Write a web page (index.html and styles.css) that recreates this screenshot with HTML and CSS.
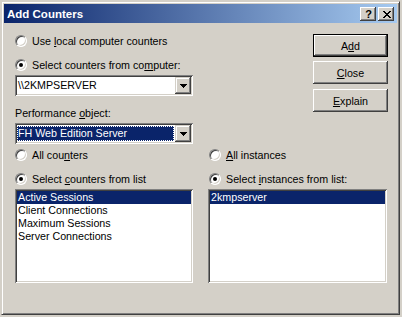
FILE: index.html
```html
<!DOCTYPE html>
<html lang="en">
<head>
    <meta charset="UTF-8">
    <title>Add Counters</title>
    <link rel="stylesheet" href="styles.css">
</head>
<body>
    <div class="window">
        <div class="titlebar">
            <span class="title">Add Counters</span>
            <div class="caption-buttons">
                <span class="caption-btn help">?</span>
                <span class="caption-btn">
                    <svg width="8" height="7" viewBox="0 0 8 7" shape-rendering="crispEdges">
                        <path d="M0 0h2v1H0zM6 0h2v1H6zM1 1h2v1H1zM5 1h2v1H5zM2 2h4v1H2zM3 3h2v1H3zM2 4h4v1H2zM1 5h2v1H1zM5 5h2v1H5zM0 6h2v1H0zM6 6h2v1H6z" fill="#000"/>
                    </svg>
                </span>
            </div>
        </div>

        <div class="dialog">
            <div class="top-row">
                <div class="source">
                    <div class="option"><span class="radio"></span><span>Use <u>l</u>ocal computer counters</span></div>
                    <div class="option second"><span class="radio checked"></span><span>Select counters from co<u>m</u>puter:</span></div>
                    <div class="combo first-combo">
                        <span class="combo-text">\\2KMPSERVER</span>
                        <span class="combo-arrow">
                            <svg width="7" height="4" viewBox="0 0 7 4" shape-rendering="crispEdges"><path d="M0 0h7v1H0zM1 1h5v1H1zM2 2h3v1H2zM3 3h1v1H3z" fill="#000"/></svg>
                        </span>
                    </div>
                    <div class="field-label">Performance <u>o</u>bject:</div>
                    <div class="combo object-combo">
                        <span class="combo-text selected">FH Web Edition Server</span>
                        <span class="combo-arrow">
                            <svg width="7" height="4" viewBox="0 0 7 4" shape-rendering="crispEdges"><path d="M0 0h7v1H0zM1 1h5v1H1zM2 2h3v1H2zM3 3h1v1H3z" fill="#000"/></svg>
                        </span>
                    </div>
                </div>

                <div class="actions">
                    <button class="btn default">A<u>d</u>d</button>
                    <button class="btn close-btn"><u>C</u>lose</button>
                    <button class="btn explain-btn"><u>E</u>xplain</button>
                </div>
            </div>

            <div class="lists">
                <div class="group counters">
                    <div class="option"><span class="radio"></span><span>All cou<u>n</u>ters</span></div>
                    <div class="option second"><span class="radio checked"></span><span>Select <u>c</u>ounters from list</span></div>
                    <div class="listbox">
                        <div class="item selected">Active Sessions</div>
                        <div class="item">Client Connections</div>
                        <div class="item">Maximum Sessions</div>
                        <div class="item">Server Connections</div>
                    </div>
                </div>
                <div class="group instances">
                    <div class="option"><span class="radio"></span><span><u>A</u>ll instances</span></div>
                    <div class="option second"><span class="radio checked"></span><span>Select <u>i</u>nstances from list:</span></div>
                    <div class="listbox">
                        <div class="item selected">2kmpserver</div>
                    </div>
                </div>
            </div>
        </div>
    </div>
</body>
</html>
```

FILE: styles.css
```css
body {
    margin: 0;
    padding: 0;
    background: #d4d0c8;
    font-family: "Liberation Sans", Arial, sans-serif;
    font-size: 10.7px;
    color: #000;
}

/* window frame */
.window {
    margin: 1px 0 0 1px;
    width: 399px;
    height: 314px;
    box-sizing: border-box;
    background: #d4d0c8;
    border: 1px solid;
    border-color: #d4d0c8 #404040 #404040 #d4d0c8;
    box-shadow: inset 1px 1px #fff, inset -1px -1px #808080;
    padding: 2px;
}

.titlebar {
    height: 19px;
    display: flex;
    align-items: center;
    justify-content: space-between;
    background: linear-gradient(to right, #0a246a, #a6caf0);
    padding: 0 3px;
}

.title {
    color: #fff;
    font-weight: bold;
    font-size: 11.5px;
}

.caption-buttons {
    display: flex;
    gap: 2px;
}

.caption-btn {
    width: 16px;
    height: 14px;
    box-sizing: border-box;
    background: #d4d0c8;
    box-shadow: inset -1px -1px #404040, inset 1px 1px #fff, inset -2px -2px #808080, inset 2px 2px #d4d0c8;
    display: flex;
    align-items: center;
    justify-content: center;
    padding: 1px 0 0 1px;
}

.caption-btn.help {
    font-weight: bold;
    font-size: 11px;
    line-height: 12px;
}

/* dialog body */
.dialog {
    padding: 11px 0 0 11px;
}

.top-row {
    display: flex;
}

.source {
    width: 178px;
    display: flex;
    flex-direction: column;
}

.option {
    display: flex;
    align-items: center;
    gap: 5px;
    height: 14px;
    white-space: nowrap;
}

.option.second {
    margin-top: 10px;
}

.radio {
    position: relative;
    flex: none;
    width: 12px;
    height: 12px;
    box-sizing: border-box;
    border-radius: 50%;
    border: 1px solid;
    border-color: #808080 #fff #fff #808080;
    background: #fff;
    box-shadow: inset 1px 1px #404040, inset -1px -1px #d4d0c8;
}

.radio.checked::after {
    content: "";
    position: absolute;
    left: 3px;
    top: 3px;
    width: 4px;
    height: 4px;
    border-radius: 50%;
    background: #000;
}

.combo {
    height: 21px;
    box-sizing: border-box;
    background: #fff;
    padding: 2px;
    display: flex;
    box-shadow: inset 1px 1px #808080, inset -1px -1px #fff, inset 2px 2px #404040, inset -2px -2px #d4d0c8;
}

.first-combo {
    margin-top: 3px;
}

.object-combo {
    margin-top: 3px;
}

.combo-text {
    flex: 1;
    line-height: 17px;
    padding-left: 1px;
    white-space: nowrap;
}

.combo-text.selected {
    margin: 1px 1px 1px 0;
    line-height: 15px;
    background: #0a246a;
    color: #fff;
    outline: 1px dotted #fff;
    outline-offset: -1px;
}

.combo-arrow {
    width: 16px;
    height: 17px;
    box-sizing: border-box;
    background: #d4d0c8;
    box-shadow: inset -1px -1px #404040, inset 1px 1px #d4d0c8, inset -2px -2px #808080, inset 2px 2px #fff;
    display: flex;
    align-items: center;
    justify-content: center;
    padding: 1px 0 0 1px;
}

.field-label {
    margin-top: 10px;
    height: 14px;
    line-height: 14px;
}

/* buttons */
.actions {
    margin-left: 120px;
    display: flex;
    flex-direction: column;
}

.btn {
    width: 75px;
    height: 23px;
    box-sizing: border-box;
    padding: 0;
    border: none;
    background: #d4d0c8;
    font: inherit;
    color: #000;
    box-shadow: inset -1px -1px #404040, inset 1px 1px #fff, inset -2px -2px #808080, inset 2px 2px #d4d0c8;
}

.btn.default {
    border: 1px solid #000;
}

.close-btn {
    margin-top: 4px;
}

.explain-btn {
    margin-top: 5px;
}

/* lists */
.lists {
    display: flex;
    gap: 15px;
    margin-top: 4px;
}

.group.counters {
    width: 178px;
}

.group.instances {
    width: 179px;
}

.group.instances .option {
    padding-left: 1px;
}

.listbox {
    margin-top: 3px;
    height: 94px;
    box-sizing: border-box;
    background: #fff;
    padding: 2px;
    box-shadow: inset 1px 1px #808080, inset -1px -1px #fff, inset 2px 2px #404040, inset -2px -2px #d4d0c8;
}

.item {
    height: 13px;
    line-height: 13px;
    padding-left: 1px;
    white-space: nowrap;
}

.item.selected {
    background: #0a246a;
    color: #fff;
}
```
